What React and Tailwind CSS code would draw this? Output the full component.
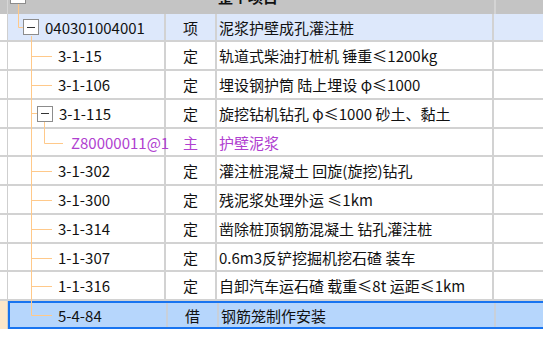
const rows = [
  { code: "040301004001", type: "项", name: "泥浆护壁成孔灌注桩", level: 0, box: true, h: 28, bg: "bg-[#dde8fb]" },
  { code: "3-1-15", type: "定", name: "轨道式柴油打桩机 锤重≤1200kg", level: 1, h: 29 },
  { code: "3-1-106", type: "定", name: "埋设钢护筒 陆上埋设 φ≤1000", level: 1, h: 29 },
  { code: "3-1-115", type: "定", name: "旋挖钻机钻孔 φ≤1000 砂土、黏土", level: 1, box: true, h: 29 },
  { code: "Z80000011@1", type: "主", name: "护壁泥浆", level: 2, h: 28, purple: true },
  { code: "3-1-302", type: "定", name: "灌注桩混凝土 回旋(旋挖)钻孔", level: 1, h: 29 },
  { code: "3-1-300", type: "定", name: "残泥浆处理外运 ≤1km", level: 1, h: 29 },
  { code: "3-1-314", type: "定", name: "凿除桩顶钢筋混凝土 钻孔灌注桩", level: 1, h: 29 },
  { code: "1-1-307", type: "定", name: "0.6m3反铲挖掘机挖石碴 装车", level: 1, h: 28 },
  { code: "1-1-316", type: "定", name: "自卸汽车运石碴 载重≤8t 运距≤1km", level: 1, h: 29 },
];

const cols = "grid grid-cols-[8px_158px_51px_277px_1fr]";

function MinusBox() {
  return (
    <span className="flex h-[16px] w-[16px] shrink-0 items-center justify-center border border-[#8c8c8c] bg-white">
      <span className="h-[1px] w-[8px] bg-[#333]" />
    </span>
  );
}

function CodeCell({ row }) {
  const pad = row.box
    ? row.level === 0
      ? "pl-[15px]"
      : "pl-[29px]"
    : row.level === 1
      ? "pl-[50px]"
      : "pl-[63px]";
  return (
    <div className={`flex items-center gap-[6px] border-r-2 border-[#d2d2d2] ${pad}`}>
      {row.box && <MinusBox />}
      <span className={row.purple ? "text-[#b040d0]" : ""}>{row.code}</span>
    </div>
  );
}

function TreeLines() {
  const branches = [56.5, 85.5, 171.5, 200.5, 229.5, 258.5, 286.5, 315.5];
  return (
    <svg className="pointer-events-none absolute left-0 top-0" width="100" height="340">
      <g stroke="#ffc98a" strokeWidth="1" fill="none">
        <path d="M18.5 4 V27.5 H23" />
        <path d="M31.5 36 V315.5" />
        {branches.map((y) => (
          <path key={y} d={`M31.5 ${y} H52`} />
        ))}
        <path d="M31.5 113.5 H37" />
        <path d="M44.5 122 V143.5 H63" />
      </g>
    </svg>
  );
}

export default function App() {
  return (
    <div className="relative h-[350px] w-[543px] overflow-hidden bg-white font-['Noto_Sans_CJK_SC',sans-serif] text-[15px] leading-none text-[#111]">
      {/* header strip, scrolled so only the bottom shows */}
      <div className={`${cols} h-[14px] overflow-hidden bg-[#c4c4c4]`}>
        <div className="border-r border-[#d6d6d6]" />
        <div className="pl-[2px]">
          <div className="-mt-[12px] h-[16px] w-[16px] border border-[#8c8c8c] bg-white" />
        </div>
        <div />
        <div className="pl-[1px]">
          <div className="-mt-[11px] font-bold leading-[16px]">整个项目</div>
        </div>
        <div className="border-l-2 border-[#d4d4d4]" />
      </div>

      {rows.map((row) => (
        <div
          key={row.code}
          className={`${cols} box-border border-b-2 border-[#d2d2d2]`}
          style={{ height: row.h }}
        >
          <div className="border-r border-[#cfcfcf] bg-white" />
          <div className={`col-span-4 grid grid-cols-[158px_51px_277px_1fr] ${row.bg || "bg-white"}`}>
            <CodeCell row={row} />
            <div
              className={`flex items-center justify-center border-r-2 border-[#d2d2d2] ${
                row.purple ? "text-[#b040d0]" : ""
              }`}
            >
              {row.type}
            </div>
            <div
              className={`flex items-center border-r-2 border-[#d2d2d2] pl-[2px] ${
                row.purple ? "text-[#b040d0]" : ""
              }`}
            >
              {row.name}
            </div>
            <div />
          </div>
        </div>
      ))}

      {/* selected row */}
      <div className={`${cols} h-[28px]`}>
        <div className="border-r border-[#cfcfcf] bg-[#fde7c9]" />
        <div className="col-span-4 grid grid-cols-[158px_51px_277px_1fr] border-2 border-r-0 border-[#1874f0] bg-[#b6d6fc]">
          <div className="flex items-center border-r-2 border-[#c8d0da] pl-[48px]">5-4-84</div>
          <div className="flex items-center justify-center border-r-2 border-[#c8d0da]">借</div>
          <div className="flex items-center border-r-2 border-[#c8d0da] pl-[2px]">钢筋笼制作安装</div>
          <div />
        </div>
      </div>

      <TreeLines />
    </div>
  );
}
